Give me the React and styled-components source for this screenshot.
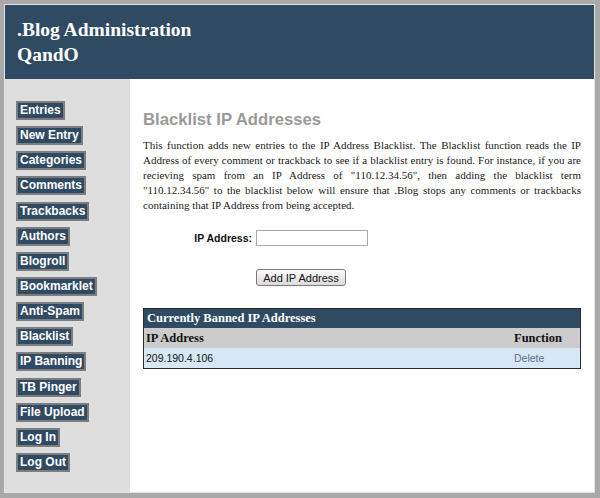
import React from 'react'
import styled, { createGlobalStyle } from 'styled-components'

const GlobalStyle = createGlobalStyle`
  html, body {
    margin: 0;
    padding: 0;
    background: #a9a9a9;
  }
  body {
    font-family: "Liberation Sans", Arial, sans-serif;
  }
`

const menu = [
  'Entries',
  'New Entry',
  'Categories',
  'Comments',
  'Trackbacks',
  'Authors',
  'Blogroll',
  'Bookmarklet',
  'Anti-Spam',
  'Blacklist',
  'IP Banning',
  'TB Pinger',
  'File Upload',
  'Log In',
  'Log Out',
]

const Frame = styled.div`
  margin: 4px 5px 5px 4px;
  height: 487px;
  border: 1px solid #e4e4e4;
  background: #fff;
  display: flex;
  flex-direction: column;
`

const Header = styled.header`
  background: #2f4a63;
  color: #fff;
  padding: 12px 12px 12px;
  font-family: "Liberation Serif", "Times New Roman", serif;
  font-weight: bold;
  font-size: 19.5px;
  line-height: 25px;
`

const Body = styled.div`
  flex: 1;
  display: flex;
`

const Sidebar = styled.nav`
  width: 125px;
  flex: none;
  background: #dedede;
  padding: 22px 0 0 11px;
  box-sizing: border-box;
`

const MenuItem = styled.a`
  display: block;
  width: fit-content;
  margin-bottom: 6.15px;
  padding: 0 2px;
  border: 2px solid #7d7d7d;
  background: #2f4a63;
  color: #fff;
  font-weight: bold;
  font-size: 12px;
  line-height: 15px;
  text-decoration: none;
`

const Content = styled.main`
  flex: 1;
  padding: 31px 13px 0 13px;
`

const Title = styled.h1`
  margin: 0;
  color: #9a9a9a;
  font-size: 16.7px;
  line-height: 20px;
  font-weight: bold;
`

const Intro = styled.p`
  margin: 8px 0 0;
  font-family: "Liberation Serif", "Times New Roman", serif;
  font-size: 11px;
  line-height: 15px;
  color: #222;
  text-align: justify;
`

const Form = styled.div`
  margin-top: 17px;
  display: grid;
  grid-template-columns: 109px auto;
  column-gap: 4px;
  row-gap: 23px;
  align-items: center;
`

const Label = styled.label`
  text-align: right;
  font-weight: bold;
  font-size: 10.5px;
  color: #111;
`

const Input = styled.input`
  width: 112px;
  height: 16px;
  box-sizing: border-box;
  border: 1px solid #a9a9a9;
  margin: 0;
  padding: 1px 3px;
`

const Button = styled.button`
  grid-column: 2;
  justify-self: start;
  width: 90px;
  height: 17px;
  padding: 0;
  border: 1px solid #7a7a7a;
  border-radius: 3px;
  background: linear-gradient(#fafafa, #dcdcdc);
  font-family: "Liberation Sans", Arial, sans-serif;
  font-size: 11px;
  color: #111;
`

const Table = styled.table`
  margin-top: 22px;
  width: 100%;
  border-collapse: collapse;
  border: 1px solid #2b2b2b;
`

const Caption = styled.th`
  background: #2f4a63;
  color: #fff;
  text-align: left;
  height: 19px;
  padding: 0 3px;
  font-family: "Liberation Serif", "Times New Roman", serif;
  font-size: 12.5px;
  font-weight: bold;
`

const HeadCell = styled.th`
  background: #cccccc;
  text-align: left;
  height: 20px;
  padding: 0 2px;
  width: ${(p) => (p.$narrow ? '64px' : 'auto')};
  font-family: "Liberation Serif", "Times New Roman", serif;
  font-size: 12.5px;
  font-weight: bold;
  color: #111;
`

const Cell = styled.td`
  background: #d7e7f6;
  height: 20px;
  padding: 0 2px;
  font-size: 10.5px;
  color: ${(p) => (p.$link ? '#5b7090' : '#111')};
`

export default function App() {
  return (
    <>
      <GlobalStyle />
      <Frame>
        <Header>
          .Blog Administration
          <br />
          QandO
        </Header>
        <Body>
          <Sidebar>
            {menu.map((item) => (
              <MenuItem key={item} href="#">
                {item}
              </MenuItem>
            ))}
          </Sidebar>
          <Content>
            <Title>Blacklist IP Addresses</Title>
            <Intro>
              This function adds new entries to the IP Address Blacklist. The
              Blacklist function reads the IP Address of every comment or
              trackback to see if a blacklist entry is found. For instance, if
              you are recieving spam from an IP Address of "110.12.34.56", then
              adding the blacklist term "110.12.34.56" to the blacklist below
              will ensure that .Blog stops any comments or trackbacks containing
              that IP Address from being accepted.
            </Intro>
            <Form>
              <Label htmlFor="ip">IP Address:</Label>
              <Input id="ip" type="text" />
              <Button type="button">Add IP Address</Button>
            </Form>
            <Table>
              <thead>
                <tr>
                  <Caption colSpan={2}>Currently Banned IP Addresses</Caption>
                </tr>
                <tr>
                  <HeadCell>IP Address</HeadCell>
                  <HeadCell $narrow>Function</HeadCell>
                </tr>
              </thead>
              <tbody>
                <tr>
                  <Cell>209.190.4.106</Cell>
                  <Cell $link>Delete</Cell>
                </tr>
              </tbody>
            </Table>
          </Content>
        </Body>
      </Frame>
    </>
  )
}
